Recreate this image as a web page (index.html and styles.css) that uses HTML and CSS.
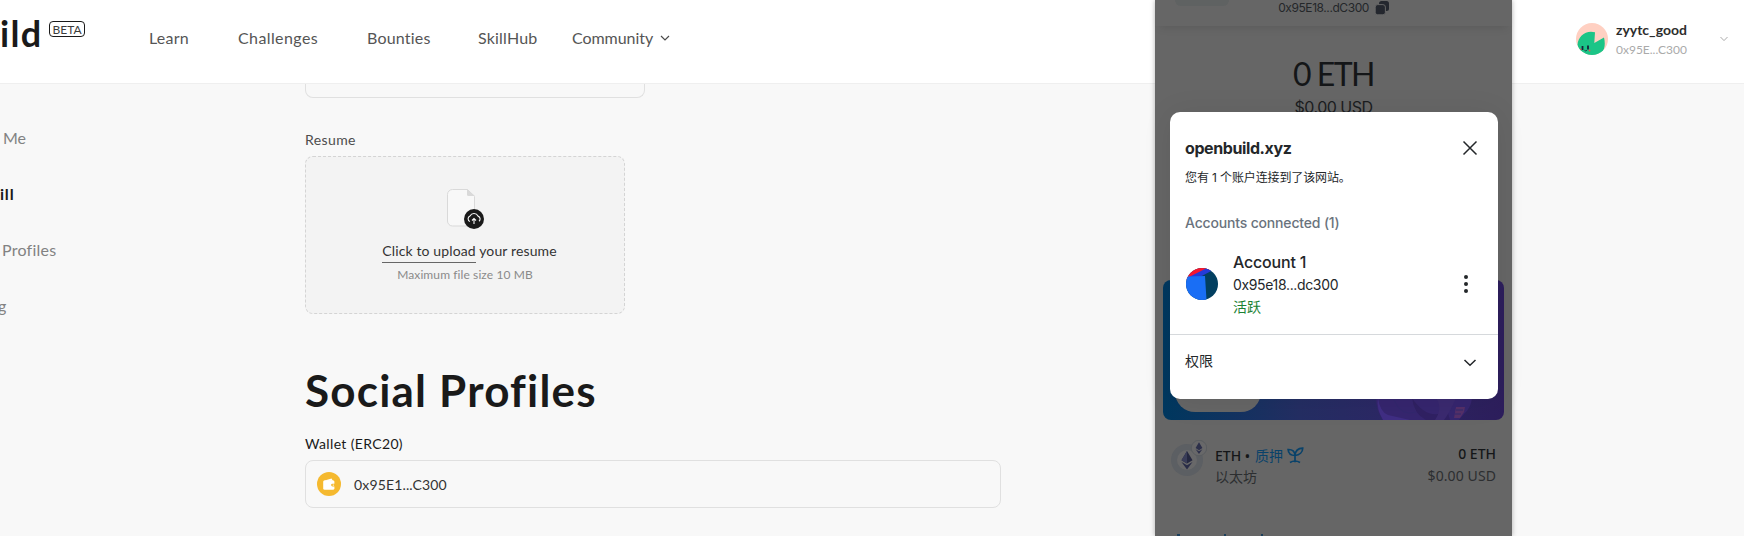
FILE: index.html
```html
<!DOCTYPE html>
<html lang="zh-CN">
<head>
<meta charset="utf-8">
<title>OpenBuild</title>
<link rel="stylesheet" href="styles.css">
</head>
<body>
<header class="site-header">
  <div class="logo">ild</div>
  <div class="beta">BETA</div>
  <nav class="nav">
    <a>Learn</a><a class="wide">Challenges</a><a>Bounties</a><a>SkillHub</a>
    <a class="nav-menu">Community <svg width="10" height="8" viewBox="0 0 10 8"><path d="M1 2l4 4 4-4" fill="none" stroke="#4b4b4b" stroke-width="1.2"/></svg></a>
  </nav>
  <div class="user">
    <svg width="32" height="32" viewBox="0 0 32 32"><defs><clipPath id="c"><circle cx="16" cy="16" r="16"/></clipPath></defs><g clip-path="url(#c)"><path fill="#ffd0c2" d="M0 0h32v32H0z"/><path fill="#1bc587" d="M19 9.3C10 6.800 2 13 1.500 22L5 32h18c5-3 7-9 5-17.500L18.300 20z"/><path d="M6.500 23v4M12 22.500v4" stroke="#15233a" stroke-width="1.800"/><path d="M8.500 27.300q1.200 1.200 2.400 0" stroke="#15233a" fill="none" stroke-width=".8"/><circle cx="4.500" cy="26.500" r=".9" fill="#ef5350"/><circle cx="13.500" cy="27.500" r=".9" fill="#ef5350"/></g></svg>
    <div class="user-text"><b>zyytc_good</b><span>0x95E...C300</span></div>
    <svg class="user-chev" width="8" height="6" viewBox="0 0 8 6"><path d="M.5 1L4 4.600 7.500 1" fill="none" stroke="#aaa"/></svg>
  </div>
</header>
<div class="page">
  <aside class="side">
    <div class="s-me">Me</div><div class="s-active">ill</div><div class="s-prof">Profiles</div><div class="s-last">g</div>
  </aside>
  <main class="main">
    <div class="field-end"></div>
    <div class="label label-resume">Resume</div>
    <div class="upload">
      <svg width="38" height="42" viewBox="0 0 38 42"><path d="M5.500 2.500h15l7 7V34a5 5 0 0 1-5 5h-17a5 5 0 0 1-5-5V7.500a5 5 0 0 1 5-5z" fill="#f8f8f8" stroke="#d9d9d9"/><path d="M20 2l8 7h-6.500A1.500 1.500 0 0 1 20 7.500z" fill="#d9d9d9"/><circle cx="27" cy="32" r="10" fill="#1a1a1a"/><path d="M23 34.500a3 3 0 0 1 0-5.600 4.500 4.500 0 0 1 8 .2 3 3 0 0 1 1 5.200M27 37v-5M25 33.500l2-2 2 2" fill="none" stroke="#f8f8f8" stroke-width="1.100"/></svg>
      <p class="up-main"><span>Click to upload</span> your resume</p>
      <p class="up-sub">Maximum file size 10 MB</p>
    </div>
    <h1>Social Profiles</h1>
    <div class="label label-wallet">Wallet (ERC20)</div>
    <div class="wallet">
      <svg width="24" height="24" viewBox="0 0 24 24"><circle cx="12" cy="12" r="12" fill="#f5b92f"/><path d="M7.300 9L12 7.200l2.600-.7L15.800 8.700" fill="#fff"/><rect x="6.200" y="8.200" width="11.200" height="9.600" rx="1.600" fill="#fff"/><path d="M18 11.700h-2.500a1.400 1.400 0 0 0 0 2.800H18z" fill="#f5b92f"/><circle cx="16.300" cy="13.100" r=".7" fill="#fff"/></svg>
      <span>0x95E1...C300</span>
    </div>
  </main>
</div>

<section class="popup">
  <div class="p-head">
    <i class="pill"></i>
    <span>0x95E18...dC300</span>
    <svg width="14" height="14" viewBox="0 0 14 14"><rect x="4" y="0" width="10" height="10" rx="2.500" fill="#24272e"/><rect x=".2" y="3.600" width="10.200" height="10.200" rx="2.500" fill="#24272e" stroke="#666" stroke-width="1"/></svg>
  </div>
  <div class="balance">0 ETH</div>
  <div class="fiat">$0.00 USD</div>
  <div class="banner">
    <i class="banner-btn"></i>
    <svg class="fox" width="104" height="22" viewBox="0 0 104 22"><path d="M2 0h96q-1 10-8 16l-5 6H9Q2 12 2 0z" fill="#36266f"/><path d="M4 0q2 14 10 17l22 5H9Q2 10 4 0z" fill="#402e84"/><path d="M38 0q12 18 26 16l8-8 4 14H52Q40 16 38 0z" fill="#302163"/><path d="M62 0h20q-6 14-12 22h-9q8-12 1-22z" fill="#3b2a70"/><path d="M82 9h9l-1 5-4 6h-6z" fill="#553069"/><path d="M20 2q7 17 22 12M82 12h7M81 16h6" stroke="#32286e" fill="none"/></svg>
  </div>
  <div class="token">
    <div class="coin">
      <svg width="36" height="36" viewBox="0 0 36 36"><circle cx="16" cy="20" r="16" fill="#5c5f63"/><circle cx="16" cy="20" r="10" fill="#686869"/><path d="M16 11l5.500 9.200L16 23.500l-5.500-3.300z" fill="#252840"/><path d="M16 11v12.500l-5.500-3.300z" fill="#3a3d58"/><path d="M10.500 22l5.500 3.200 5.500-3.200L16 29.500z" fill="#292c47"/><circle cx="28" cy="8" r="7.700" fill="#686869" stroke="#575a5e" stroke-width=".8"/><path d="M28 2.200l3.400 5.900-3.400 2.200-3.400-2.200zM24.600 9.200l3.400 2 3.400-2L28 14z" fill="#2c2f4a"/></svg>
    </div>
    <div class="t-name"><div class="t-line"><span class="t-eth">ETH •</span><span class="stake">质押</span><svg width="17" height="17" viewBox="0 0 17 17"><path d="M8 8.500C4 8.500 1.400 6.500 1.100 2.500 5.300 2.300 8 4.300 8 8.500v6.800M8 8.500C8.400 4.200 11 1.300 15.700 1.200 15.700 5.200 12.500 8 8 8.500M3 15.500Q8 12.500 13 15.500" fill="none" stroke="#09426a" stroke-width="1.700"/></svg></div><div class="t-cn">以太坊</div></div>
    <div class="t-val"><b>0 ETH</b><span>$0.00 USD</span></div>
  </div>
  <svg class="tail" width="100" height="2" viewBox="0 0 100 2"><path d="M6 1h3M53 1h2M90 1h2" stroke="#1b3f5c" stroke-width="2"/></svg>
  <div class="modal">
    <div class="m-top">
      <div class="m-title"><strong>openbuild.xyz</strong>
        <svg width="16" height="16" viewBox="0 0 16 16"><path d="M1.500 1.500l13 13M14.500 1.500l-13 13" stroke="#24272a" stroke-width="1.500"/></svg></div>
      <p class="m-desc">您有 1 个账户连接到了该网站。</p>
      <p class="m-count">Accounts connected (1)</p>
      <div class="account">
        <svg width="32" height="32" viewBox="0 0 32 32"><defs><clipPath id="a"><circle cx="16" cy="16" r="16"/></clipPath></defs><g clip-path="url(#a)"><path fill="#023f60" d="M0 0h32v32H0z"/><path d="M0 0h24v2L3 12H0z" fill="#f8152f"/><path d="M3 9L21 0l6 2-13 7z" fill="#243bd9"/><path d="M0 8.500L19 8l1.500 24H0z" fill="#196ef5"/></g></svg>
        <div class="a-text"><b>Account 1</b><span>0x95e18...dc300</span><em>活跃</em></div>
        <svg width="4" height="18" viewBox="0 0 4 18"><g fill="#24272a"><circle cx="2" cy="2" r="2"/><circle cx="2" cy="9" r="2"/><circle cx="2" cy="16" r="2"/></g></svg>
      </div>
    </div>
    <div class="m-bottom"><span>权限</span><svg width="14" height="8" viewBox="0 0 14 8"><path d="M1.500 1l5.500 5.300L12.500 1" fill="none" stroke="#24272a" stroke-width="1.500"/></svg></div>
  </div>
</section>
</body>
</html>
```
FILE: styles.css
```css
* { box-sizing: border-box; }
body { margin: 0; width: 1744px; height: 536px; overflow: hidden; position: relative; background: #f8f8f8; color: #1a1a1a; font-family: Lato, "Noto Sans CJK SC", sans-serif; }
p, h1 { margin: 0; }
svg { display: block; flex: none; }

.site-header { display: flex; height: 84px; background: #fff; border-bottom: 1px solid #efefef; }
.logo { width: 49px; padding-top: 11px; font-size: 36px; line-height: 44px; font-weight: 700; letter-spacing: 1.3px; }
.beta { width: 36px; height: 16px; margin-top: 21px; border: 1px solid #1a1a1a; border-radius: 4px; font-size: 12px; line-height: 15px; text-align: center; color: #3c3c3c; }
.nav { display: grid; grid-template-columns: 89px 129px 111px 94px auto; margin: 26px 0 0 64px; height: 24px; font-size: 16px; line-height: 24px; color: #555; letter-spacing: .2px; }
.nav .wide { letter-spacing: .4px; }
.nav .nav-menu { display: flex; align-items: center; gap: 7px; letter-spacing: -.05px; }
.user { display: flex; align-items: flex-start; margin: 23px 16px 0 auto; }
.user-text { display: flex; flex-direction: column; width: 112px; padding-left: 8px; margin-top: -3px; }
.user-text b { font-size: 14px; line-height: 20px; font-weight: 700; color: #2d2d2d; }
.user-text span { font-size: 12px; line-height: 20px; color: #aaa; }
.user-chev { margin-top: 13px; }

.page { display: flex; }
.side { width: 305px; padding-top: 42px; font-size: 16px; color: #828282; }
.side div { height: 56px; line-height: 24px; }
.side .s-me { padding-left: 3px; }
.side .s-active { color: #1a1a1a; font-weight: 700; letter-spacing: .8px; }
.side .s-prof { padding-left: 2px; letter-spacing: .25px; }
.side .s-last { margin-left: -2px; }
.main { width: 696px; }
.field-end { width: 340px; height: 14px; border: 1px solid #e0e0e0; border-top: 0; border-radius: 0 0 8px 8px; }
.label { font-size: 14px; line-height: 20px; }
.label-resume { margin-top: 32px; color: #4d4d4d; letter-spacing: .4px; }
.upload { display: flex; flex-direction: column; align-items: center; width: 320px; height: 158px; margin-top: 6px; padding-top: 30px; border: 1px dashed #d4d4d4; border-radius: 8px; background: #f3f3f3; }
.upload svg { margin-left: 2px; }
.up-main { margin: 12px 0 0 9px; font-size: 14px; line-height: 20px; color: #333; letter-spacing: .13px; }
.up-main span { display: inline-block; height: 22px; border-bottom: 1px solid #666; }
.up-sub { font-size: 12px; line-height: 20px; margin-top: 2px; color: #8a8a8a; letter-spacing: .1px; }
h1 { margin-top: 46px; font-size: 44px; line-height: 60px; font-weight: 700; letter-spacing: 1.2px; }
.label-wallet { margin-top: 14px; letter-spacing: .35px; }
.wallet { display: flex; align-items: center; gap: 13px; height: 48px; margin-top: 6px; padding-left: 11px; border: 1px solid #e0e0e0; border-radius: 8px; font-size: 14px; color: #333; letter-spacing: .15px; }

.popup { position: absolute; left: 1155px; top: 0; width: 357px; height: 536px; background: #666; box-shadow: 0 0 5px rgba(0,0,0,.3); font-family: Inter, "Noto Sans CJK SC", sans-serif; color: #141618; }
.p-head { display: flex; justify-content: flex-end; height: 26px; padding-right: 123px; font-size: 12px; line-height: 16px; color: #24272a; letter-spacing: -.42px; box-shadow: 0 6px 10px -5px rgba(0,0,0,.13); }
.pill { width: 54px; height: 6px; margin-right: auto; margin-left: 20px; border-radius: 0 0 25px 25px; background: #5f6262; }
.p-head svg { margin: 1px 0 0 6px; }
.balance { margin-top: 27px; height: 42px; font: 32px/42px Lato, sans-serif; letter-spacing: -1.5px; text-align: center; }
.fiat { height: 24px; font-size: 16px; line-height: 24px; letter-spacing: -.5px; text-align: center; color: #1b1d1f; }
.banner { position: relative; width: 341px; height: 140px; margin: 161px 0 0 8px; border-radius: 8px; overflow: hidden; background: linear-gradient(90deg, #00385f, #242e63 40%, #2c2865 65%, #2d1e5c); }
.banner-btn { position: absolute; left: 12px; bottom: 8px; width: 86px; height: 40px; border-radius: 20px; background: #666; }
.fox { position: absolute; left: 211px; bottom: 0; }
.token { display: flex; height: 60px; padding: 20px 16px 0; }
.t-name { padding: 4px 0 0 8px; }
.t-line { display: flex; height: 22px; align-items: center; font-size: 14px; }
.t-eth { width: 40px; font-family: "Noto Sans", sans-serif; font-weight: 500; white-space: nowrap; }
.stake { width: 32px; color: #09426a; }
.t-cn { font-size: 14px; line-height: 22px; color: #2c2e30; }
.t-val { display: flex; flex-direction: column; align-items: flex-end; margin-left: auto; padding-top: 3px; font: 14px/22px "Noto Sans", sans-serif; }
.t-val b { font-weight: 500; }
.t-val span { color: #2c2e30; letter-spacing: .1px; }
.tail { margin: 54px 0 0 16px; }

.modal { position: absolute; left: 15px; top: 112px; width: 328px; height: 287px; border-radius: 10px; background: #fff; color: #24272a; box-shadow: 0 2px 30px rgba(0,0,0,.08); }
.m-top { height: 223px; padding: 24px 20px 0 15px; border-bottom: 1px solid #d6d9dc; }
.m-title { display: flex; justify-content: space-between; align-items: center; font-size: 16px; line-height: 24px; letter-spacing: -.4px; }
.m-desc { margin-top: 8px; font-size: 12px; line-height: 20px; letter-spacing: -.12px; }
.m-count { margin-top: 25px; font-size: 14px; line-height: 20px; font-weight: 500; letter-spacing: -.17px; color: #6a737d; }
.account { display: flex; align-items: center; margin-top: 17px; height: 68px; padding: 0 10px 0 1px; }
.a-text { display: flex; flex-direction: column; padding-left: 15px; margin-right: auto; font-size: 14px; line-height: 22px; }
.a-text b { font-size: 16px; line-height: 24px; font-weight: 500; letter-spacing: -.2px; }
.a-text span { letter-spacing: -.35px; }
.a-text em { font-style: normal; color: #1c8234; }
.m-bottom { display: flex; justify-content: space-between; height: 63px; padding: 15px 21px 0 15px; font-size: 14px; line-height: 22px; }
.m-bottom svg { margin-top: 9px; }
```
